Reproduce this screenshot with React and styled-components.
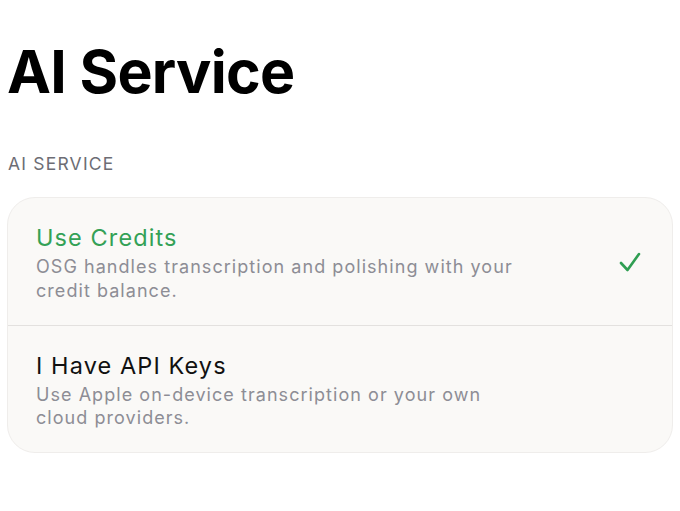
import React from 'react';
import styled, { createGlobalStyle } from 'styled-components';

const GlobalStyle = createGlobalStyle`
    html, body {
        margin: 0;
        padding: 0;
        background: #ffffff;
        font-family: Inter, "Noto Sans", "Liberation Sans", sans-serif;
        -webkit-font-smoothing: antialiased;
    }
`

const Page = styled.div`
    padding: 36px 7px 0 7px;
`

const Title = styled.h1`
    margin: 0;
    font-size: 59px;
    font-weight: 700;
    line-height: 71px;
    letter-spacing: -0.7px;
    color: #000;
`

const SectionLabel = styled.div`
    margin: 46px 0 0 0;
    padding-left: 1px;
    font-size: 17.5px;
    line-height: 22px;
    color: #6d6d74;
    letter-spacing: 1.2px;
`

const Card = styled.div`
    margin-top: 22px;
    background: #faf9f7;
    border: 1px solid #efedeb;
    border-radius: 28px;
    overflow: hidden;
`

const Row = styled.div`
    display: flex;
    align-items: center;
    height: 127px;
    padding: 0 32px 0 28px;
    box-sizing: border-box;
    & + & {
        border-top: 1px solid #e3e1df;
    }
`

const Text = styled.div`
    flex: 1;
    max-width: 500px;
    padding-top: 2px;
`

const OptionTitle = styled.div`
    font-size: 23.5px;
    line-height: 29px;
    letter-spacing: 1.1px;
    color: ${({selected}) => selected ? '#33a156' : '#111'};
    margin-bottom: 3px;
`

const Desc = styled.div`
    font-size: 18px;
    line-height: 23.5px;
    letter-spacing: 1.05px;
    color: #8d8d95;
`

const Check = styled.svg`
    width: 22px;
    height: 20px;
    margin-left: auto;
    margin-right: -1px;
`

const options = [
    {
        title: 'Use Credits',
        desc: 'OSG handles transcription and polishing with your credit balance.',
        selected: true,
    },
    {
        title: 'I Have API Keys',
        desc: 'Use Apple on-device transcription or your own cloud providers.',
        selected: false,
    },
]

const App = () => {
    return (
        <Page>
            <GlobalStyle />
            <Title>AI Service</Title>
            <SectionLabel>AI SERVICE</SectionLabel>
            <Card>
                {options.map(o => (
                    <Row key={o.title}>
                        <Text>
                            <OptionTitle selected={o.selected}>{o.title}</OptionTitle>
                            <Desc>{o.desc}</Desc>
                        </Text>
                        {o.selected &&
                            <Check viewBox="0 0 22 20">
                                <path d="M2 11 L8.5 18 L20 2" fill="none" stroke="#2f9e52" strokeWidth="2.6" strokeLinecap="round" strokeLinejoin="round" />
                            </Check>
                        }
                    </Row>
                ))}
            </Card>
        </Page>
    )
}

export default App
